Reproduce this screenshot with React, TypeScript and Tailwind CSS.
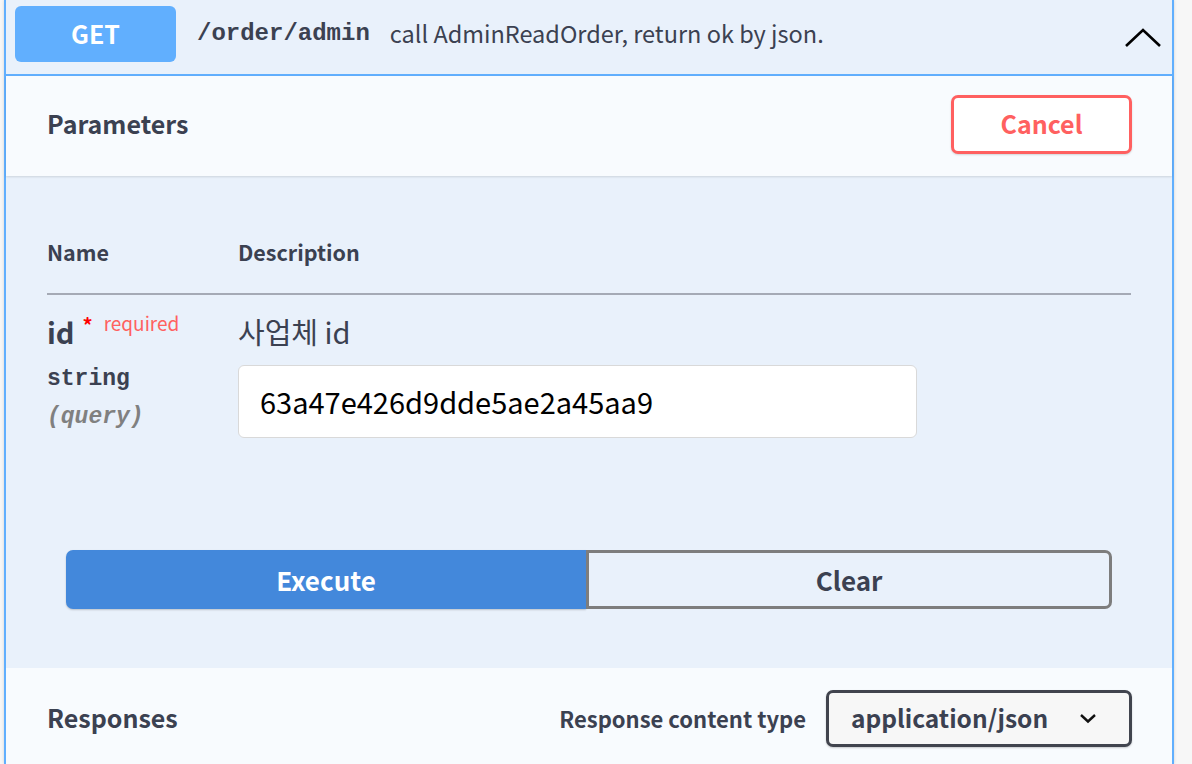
import React from "react";

const sans = "font-['Noto_Sans_CJK_KR','Noto_Sans',sans-serif]";
const mono = "font-['Liberation_Mono','DejaVu_Sans_Mono',monospace]";

function ChevronUp() {
  return (
    <svg width="38" height="22" viewBox="0 0 38 22" fill="none">
      <path d="M2 19 L19 3 L36 19" stroke="#000" strokeWidth="2.6" />
    </svg>
  );
}

function ChevronDown() {
  return (
    <svg width="18" height="12" viewBox="0 0 18 12" fill="none">
      <path d="M2 3 L9 9.5 L16 3" stroke="#111" strokeWidth="2.4" />
    </svg>
  );
}

export default function App() {
  return (
    <div className={`h-[764px] w-full overflow-hidden bg-[#f7f7f7] pl-[4px] pr-[18px] text-[#3b4151] ${sans}`}>
      <div className="flex h-full flex-col border-x-2 border-[#61affe] bg-[#e9f1fb] shadow-[0_0_3px_rgba(0,0,0,0.15)]">
        {/* summary */}
        <div className="flex h-[76px] shrink-0 items-center border-b-2 border-[#61affe] pl-[9px] pr-[10px] pb-[6px]">
          <div className="flex h-[56px] w-[161px] items-center justify-center rounded-[6px] bg-[#61affe] text-[25px] font-bold text-white">
            GET
          </div>
          <span className={`ml-[21px] text-[24px] font-bold text-[#3b4151] ${mono}`}>
            /order/admin
          </span>
          <span className="ml-[20px] text-[23.5px] text-[#3b4151]">
            call AdminReadOrder, return ok by json.
          </span>
          <div className="ml-auto mt-[8px]">
            <ChevronUp />
          </div>
        </div>

        {/* parameters header */}
        <div className="flex h-[100px] shrink-0 items-center justify-between bg-[#f8fbfe] pb-[4px] pl-[41px] pr-[40px] shadow-[0_1px_2px_rgba(0,0,0,0.12)]">
          <h4 className="text-[25px] font-bold">Parameters</h4>
          <button className="flex h-[59px] w-[181px] items-center justify-center rounded-[7px] border-[3px] border-[#ff6060] bg-white text-[25px] font-bold text-[#ff6060] shadow-[0_1px_2px_rgba(0,0,0,0.15)]">
            Cancel
          </button>
        </div>

        {/* parameters body */}
        <div className="flex h-[492px] shrink-0 flex-col px-[41px]">
          <div className="flex h-[119px] items-end border-b-2 border-[#a5aab5] pb-[25px] text-[21.5px] font-bold">
            <div className="w-[191px]">Name</div>
            <div>Description</div>
          </div>
          <div className="flex pt-[18px]">
            <div className="w-[191px]">
              <div className="flex items-start">
                <span className="text-[29px] font-bold leading-[36px]">id</span>
                <span className="ml-[8px] mt-[2px] text-[20px] font-bold leading-[20px] text-[#ff0000]">*</span>
                <span className="ml-[11px] mt-[-2px] text-[19px] leading-[24px] text-[#ff6060]">required</span>
              </div>
              <div className={`mt-[16px] text-[23px] font-bold leading-[28px] ${mono}`}>string</div>
              <div className={`mt-[10px] text-[23px] font-bold italic leading-[28px] text-[#808080] ${mono}`}>(query)</div>
            </div>
            <div>
              <div className="text-[29px] leading-[36px]">사업체 id</div>
              <div className="mt-[16px] flex h-[73px] w-[679px] items-center rounded-[6px] border border-[#d9d9d9] bg-white pl-[21px] text-[29px] text-black">
                63a47e426d9dde5ae2a45aa9
              </div>
            </div>
          </div>
          <div className="mt-[112px] flex h-[59px] pl-[19px] pr-[19px]">
            <button className="flex h-full flex-1 items-center justify-center rounded-l-[7px] bg-[#4388db] text-[26px] font-bold text-white shadow-[0_1px_2px_rgba(0,0,0,0.2)]">
              Execute
            </button>
            <button className="flex h-full flex-1 items-center justify-center rounded-r-[7px] border-[3px] border-[#7d7d7d] text-[26px] font-bold text-[#3b4151]">
              Clear
            </button>
          </div>
        </div>

        {/* responses */}
        <div className="flex h-[100px] shrink-0 items-center justify-between bg-[#f8fbfe] pl-[41px] pr-[40px]">
          <h4 className="text-[25px] font-bold">Responses</h4>
          <div className="flex items-center">
            <span className="text-[22px] font-bold">Response content type</span>
            <div className="ml-[20px] flex h-[57px] w-[306px] items-center justify-between rounded-[7px] border-[3px] border-[#41444e] bg-[#f7f7f7] pl-[22px] pr-[32px] text-[24.5px] font-semibold shadow-[0_1px_2px_rgba(0,0,0,0.2)]">
              <span>application/json</span>
              <ChevronDown />
            </div>
          </div>
        </div>
      </div>
    </div>
  );
}
